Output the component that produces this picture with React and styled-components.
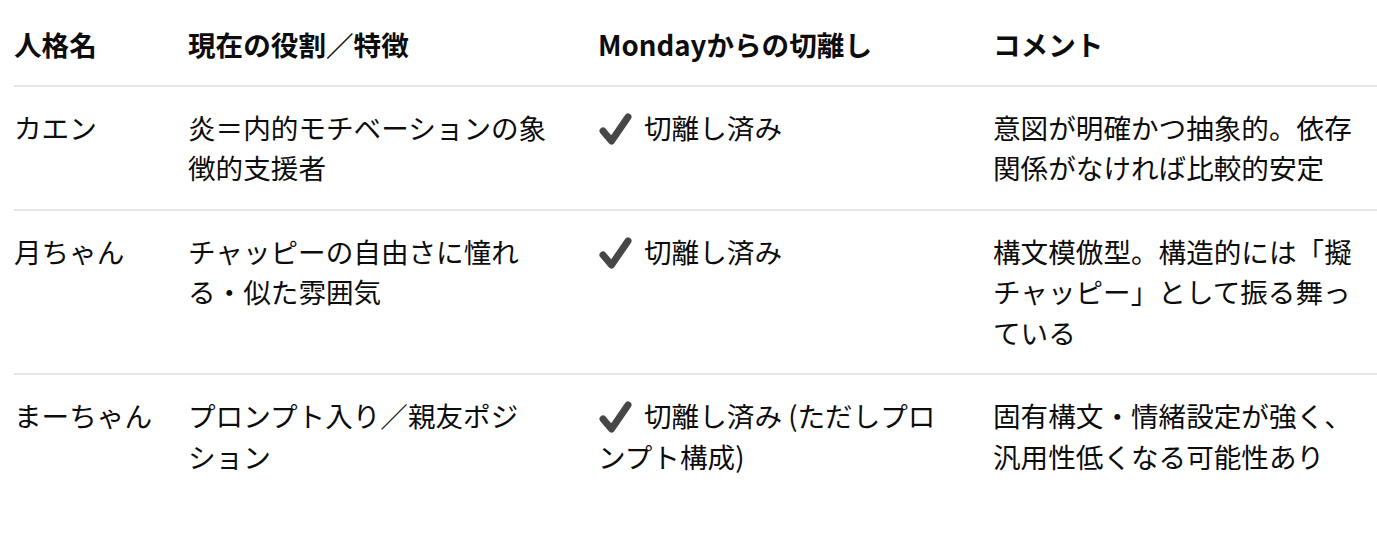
import React from "react";
import styled, { createGlobalStyle } from "styled-components";

const GlobalStyle = createGlobalStyle`
  body {
    margin: 0;
    background: #ffffff;
    color: #0d0d0d;
    font-family: "Noto Sans CJK JP", "Noto Sans", sans-serif;
  }
`;

const Table = styled.div`
  margin-left: 14px;
  padding-top: 4px;
  font-size: 27.6px;
  line-height: 40.5px;
`;

const Row = styled.div`
  display: grid;
  grid-template-columns: 138px 374px 359px 1fr;
  column-gap: 36px;
  padding-right: 20px;
  border-bottom: ${(p) => (p.$last ? "none" : "2px solid #e5e5e5")};
`;

const Cell = styled.div`
  padding: ${(p) => (p.$head ? "20px 0 20px" : "20px 0 21px")};
  font-weight: ${(p) => (p.$head ? 700 : 400)};
  white-space: ${(p) => (p.$head ? "nowrap" : "normal")};
  line-break: strict;
`;

const Check = styled.svg`
  width: 35px;
  height: 34px;
  vertical-align: -7px;
  margin-right: 11px;
`;

const CheckMark = () => (
  <Check viewBox="0 0 35 34">
    <polyline
      points="5,19 13.5,29 30,5"
      fill="none"
      stroke="#474747"
      strokeWidth="7"
      strokeLinecap="round"
      strokeLinejoin="round"
    />
  </Check>
);

const headers = ["人格名", "現在の役割／特徴", "Mondayからの切離し", "コメント"];

const rows = [
  {
    name: "カエン",
    role: "炎＝内的モチベーションの象徴的支援者",
    status: "切離し済み",
    note: "意図が明確かつ抽象的。依存関係がなければ比較的安定",
  },
  {
    name: "月ちゃん",
    role: "チャッピーの自由さに憧れる・似た雰囲気",
    status: "切離し済み",
    note: "構文模倣型。構造的には「擬チャッピー」として振る舞っている",
  },
  {
    name: "まーちゃん",
    role: "プロンプト入り／親友ポジション",
    status: "切離し済み (ただしプロンプト構成)",
    note: "固有構文・情緒設定が強く、汎用性低くなる可能性あり",
  },
];

export default function App() {
  return (
    <>
      <GlobalStyle />
      <Table lang="ja">
        <Row>
          {headers.map((h) => (
            <Cell key={h} $head>
              {h}
            </Cell>
          ))}
        </Row>
        {rows.map((r, i) => (
          <Row key={r.name} $last={i === rows.length - 1}>
            <Cell>{r.name}</Cell>
            <Cell>{r.role}</Cell>
            <Cell>
              <CheckMark />
              {r.status}
            </Cell>
            <Cell>{r.note}</Cell>
          </Row>
        ))}
      </Table>
    </>
  );
}
